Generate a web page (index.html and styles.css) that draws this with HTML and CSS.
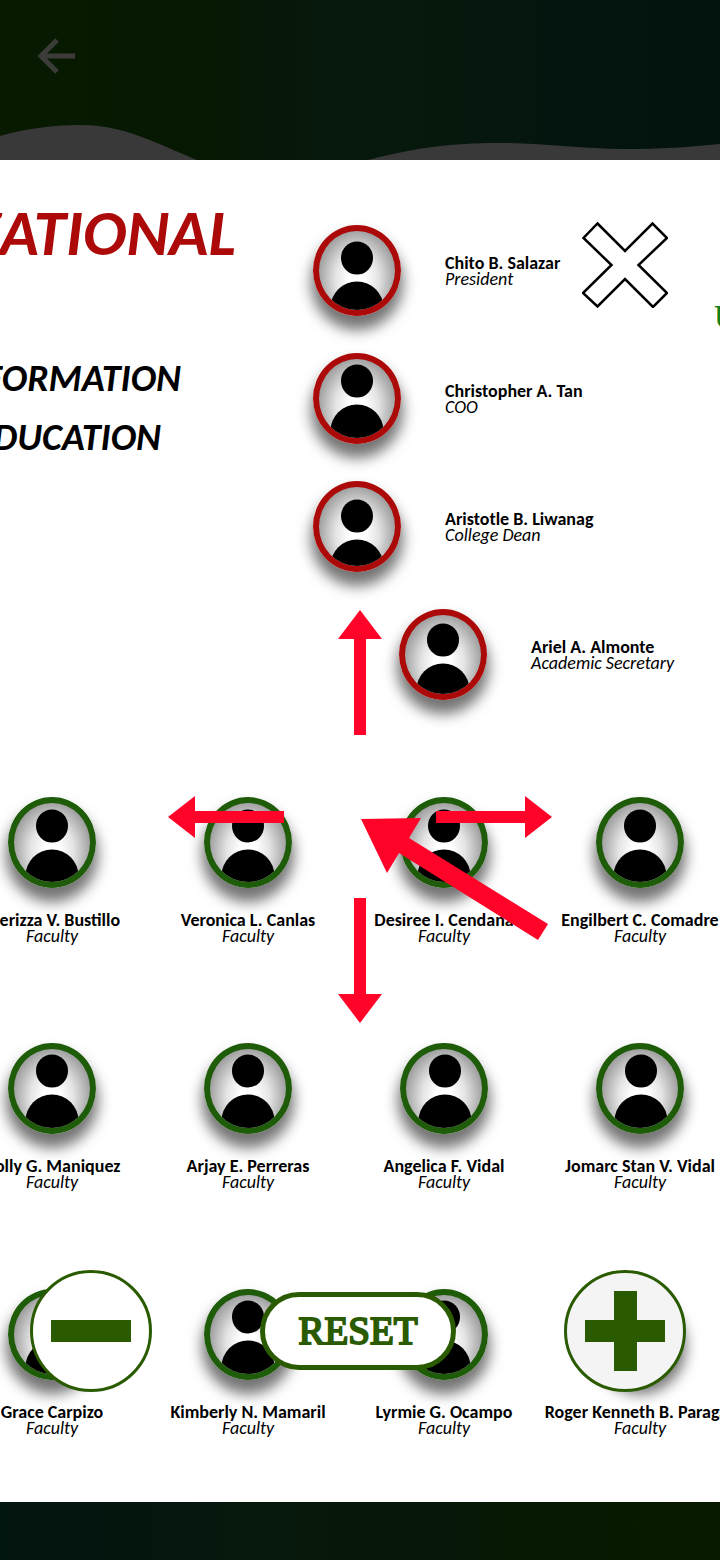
FILE: index.html
```
<!DOCTYPE html>
<html lang="en">
<head>
<meta charset="utf-8">
<meta name="viewport" content="width=device-width, initial-scale=1">
<title>Organizational chart</title>
<link rel="stylesheet" href="styles.css">
</head>
<body>
<svg class="defs" aria-hidden="true">
  <defs>
    <clipPath id="face"><ellipse cx="44" cy="45.5" rx="38.5" ry="40"/></clipPath>
    <g id="person"><ellipse cx="44" cy="28" rx="16" ry="16.5"/><ellipse cx="44" cy="78" rx="26.5" ry="26.5"/></g>
  </defs>
</svg>
<div class="app">
  <header class="topbar">
    <button class="back" aria-label="Back">
      <svg viewBox="0 0 38 36"><path d="M38 18H4M20 2L4 18L20 34" fill="none" stroke="currentColor" stroke-width="5"/></svg>
    </button>
    <svg class="wave" viewBox="0 0 720 40" preserveAspectRatio="none" aria-hidden="true">
      <path d="M0 16C25 9 50 5 80 5C125 5 155 23 197 40H0ZM368 40C415 28 450 23 500 23C545 23 580 29 625 29C660 29 690 27 720 24V40Z" fill="#3a393a"/>
    </svg>
  </header>

  <main class="viewer">
    <div class="chart">
      <div class="upper">
        <div class="titles">
          <h1>ORGANIZATIONAL</h1>
          <h2>INFORMATION</h2>
          <h2>EDUCATION</h2>
        </div>
        <ul class="officers">
          <li class="officer"><svg class="avatar" viewBox="6 6 76 79"><g clip-path="url(#face)"><use href="#person" y="5"/></g></svg><p class="label"><b>Chito B. Salazar</b><i>President</i></p></li>
          <li class="officer"><svg class="avatar" viewBox="6 6 76 79"><g clip-path="url(#face)"><use href="#person"/></g></svg><p class="label"><b>Christopher A. Tan</b><i>COO</i></p></li>
          <li class="officer"><svg class="avatar" viewBox="6 6 76 79"><g clip-path="url(#face)"><use href="#person" y="7"/></g></svg><p class="label"><b>Aristotle B. Liwanag</b><i>College Dean</i></p></li>
          <li class="officer staff"><svg class="avatar" viewBox="6 6 76 79"><g clip-path="url(#face)"><use href="#person" y="3"/></g></svg><p class="label"><b>Ariel A. Almonte</b><i>Academic Secretary</i></p></li>
        </ul>
        <p class="school">U</p>
      </div>
      <ul class="faculty">
        <li class="member"><svg class="avatar" viewBox="6 6 76 79"><g clip-path="url(#face)"><use href="#person" y="1"/></g></svg><p class="label"><b>Merizza V. Bustillo</b><i>Faculty</i></p></li>
        <li class="member"><svg class="avatar" viewBox="6 6 76 79"><g clip-path="url(#face)"><use href="#person" y="1"/></g></svg><p class="label"><b>Veronica L. Canlas</b><i>Faculty</i></p></li>
        <li class="member"><svg class="avatar" viewBox="6 6 76 79"><g clip-path="url(#face)"><use href="#person" y="1"/></g></svg><p class="label"><b>Desiree I. Cendana</b><i>Faculty</i></p></li>
        <li class="member"><svg class="avatar" viewBox="6 6 76 79"><g clip-path="url(#face)"><use href="#person" y="1"/></g></svg><p class="label"><b>Engilbert C. Comadre</b><i>Faculty</i></p></li>
        <li class="member"><svg class="avatar" viewBox="6 6 76 79"><g clip-path="url(#face)"><use href="#person"/></g></svg><p class="label"><b>Dolly G. Maniquez</b><i>Faculty</i></p></li>
        <li class="member"><svg class="avatar" viewBox="6 6 76 79"><g clip-path="url(#face)"><use href="#person"/></g></svg><p class="label"><b>Arjay E. Perreras</b><i>Faculty</i></p></li>
        <li class="member"><svg class="avatar" viewBox="6 6 76 79"><g clip-path="url(#face)"><use href="#person" x="1"/></g></svg><p class="label"><b>Angelica F. Vidal</b><i>Faculty</i></p></li>
        <li class="member"><svg class="avatar" viewBox="6 6 76 79"><g clip-path="url(#face)"><use href="#person" x="1"/></g></svg><p class="label"><b>Jomarc Stan V. Vidal</b><i>Faculty</i></p></li>
        <li class="member"><svg class="avatar" viewBox="6 6 76 79"><g clip-path="url(#face)"><use href="#person"/></g></svg><p class="label"><b>Grace Carpizo</b><i>Faculty</i></p></li>
        <li class="member"><svg class="avatar" viewBox="6 6 76 79"><g clip-path="url(#face)"><use href="#person"/></g></svg><p class="label"><b>Kimberly N. Mamaril</b><i>Faculty</i></p></li>
        <li class="member"><svg class="avatar" viewBox="6 6 76 79"><g clip-path="url(#face)"><use href="#person"/></g></svg><p class="label"><b>Lyrmie G. Ocampo</b><i>Faculty</i></p></li>
        <li class="member"><svg class="avatar" viewBox="6 6 76 79"><g clip-path="url(#face)"><use href="#person"/></g></svg><p class="label"><b>Roger Kenneth B. Paragas</b><i>Faculty</i></p></li>
      </ul>
    </div>

    <button class="close" aria-label="Close">
      <svg viewBox="0 0 86 86"><path d="M15.500 1.500L43 29L70.500 1.500L85 16L56.500 43L85 71L71 85L43 57L15.500 84.500L1 71L29.500 43L1.500 16Z" fill="#fff" stroke="#000" stroke-width="2.500"/></svg>
    </button>

    <div class="pan">
      <button class="up" aria-label="Pan up"><svg width="44" height="125" viewBox="0 0 44 125"><path d="M22 0L44 29H28V125H16V29H0Z"/></svg></button>
      <button class="left" aria-label="Pan left"><svg width="116" height="42" viewBox="0 0 116 42"><path d="M0 21L27 0V15H116V27H27V42Z"/></svg></button>
      <button class="right" aria-label="Pan right"><svg width="116" height="42" viewBox="0 0 116 42"><path d="M116 21L89 0V15H0V27H89V42Z"/></svg></button>
      <button class="down" aria-label="Pan down"><svg width="44" height="125" viewBox="0 0 44 125"><path d="M22 125L44 96H28V0H16V96H0Z"/></svg></button>
      <svg class="pointer" viewBox="0 0 187 122" aria-hidden="true"><path d="M0 1L60 0L48 20L187 106L177 122L38 35L26 55Z"/></svg>
    </div>

    <div class="zoombar">
      <button class="round" aria-label="Zoom out"><svg viewBox="0 0 80 80"><path d="M0 29H80V51H0Z"/></svg></button>
      <button class="reset">RESET</button>
      <button class="round tinted" aria-label="Zoom in"><svg viewBox="0 0 80 80"><path d="M0 29H29V0H52V29H80V51H52V80H29V51H0Z"/></svg></button>
    </div>
  </main>
  <footer class="bottombar"></footer>
</div>
</body>
</html>
```
FILE: styles.css
```
* { box-sizing: border-box; }
body { margin: 0; background: #fff; color: #000; font-family: Carlito, Lato, sans-serif; }
h1, h2, p, ul { margin: 0; padding: 0; }
ul { list-style: none; }
button { padding: 0; border: 0; background: none; font: inherit; cursor: pointer; }
svg { display: block; }
.defs { position: absolute; width: 0; height: 0; }

.app { display: flex; flex-direction: column; min-height: 100vh; overflow: hidden; }

.topbar {
  display: flex; flex-direction: column; justify-content: space-between;
  flex: none; height: 160px; padding-top: 38px;
  background: linear-gradient(90deg, #081a00, #071803 30%, #07180b 38%, #06180d 65%, #04150f 78%, #03130e);
}
.back { width: 38px; margin-left: 37px; color: #3c3c3b; }
.wave { width: 100%; height: 40px; }
.bottombar { flex: none; height: 58px; background: linear-gradient(90deg, #03150f, #05160e 25%, #07180c 35%, #07180a 62%, #071803 70%, #081a00); }

.viewer { position: relative; flex: 1; overflow: hidden; background: #fff; }
.upper { display: grid; grid-template-columns: 236px 478px 1fr; padding-top: 65px; }
.titles { display: flex; flex-direction: column; align-items: flex-end; font-style: italic; white-space: nowrap; }
h1 { margin: -26px 0 82px; color: #ac0909; font-size: 65px; line-height: 68px; }
h2 { margin-right: 55px; font-size: 38px; line-height: 59px; }
h2 + h2 { margin-right: 75px; }

.officers { display: grid; grid-auto-rows: 128px; padding-left: 77px; color: #ac0909; }
.officer { display: flex; align-items: center; align-self: start; gap: 44px; }
.staff { padding-left: 86px; }
.avatar {
  flex: none; width: 88px; height: 91px;
  border-radius: 50%;
  background: radial-gradient(ellipse at 50% 60%, #fff 15%, #e4e4e4 40%, #a0a0a0 72%);
  border: 6px solid currentColor;
  box-shadow: 0 12px 14px 2px rgba(0, 0, 0, .55);
  fill: #000;
}
.label { color: #000; font-size: 18px; line-height: 16px; white-space: nowrap; }
.label b, .label i { display: block; }
.school { margin-top: 75px; color: #12801c; font: bold 34px/34px "Liberation Serif", serif; }

.faculty {
  display: grid; grid-template-columns: repeat(4, 196px); grid-template-rows: 246px 246px auto;
  margin: 60px 0 0 -46px; color: #1f5c0a;
}
.member { display: flex; flex-direction: column; align-items: center; gap: 24px; text-align: center; }

.close { position: absolute; top: 62px; right: 52px; width: 86px; }

.pan {
  position: absolute; top: 450px; left: 50%; width: 384px; margin-left: -192px;
  display: grid; grid-template-columns: 116px 152px 116px; grid-template-rows: 125px 163px 125px;
  place-items: center; fill: #ff0329;
}
.up { grid-area: 1 / 2; }
.left { grid-area: 2 / 1; }
.right { grid-area: 2 / 3; }
.down { grid-area: 3 / 2; }
.pointer { position: absolute; top: 208px; left: 193px; width: 187px; }

.zoombar {
  position: absolute; right: 0; bottom: 110px; left: 0;
  display: flex; align-items: center; justify-content: space-between; padding: 0 34px 0 30px;
  color: #2b5b00;
}
.round {
  display: grid; place-items: center; width: 122px; height: 122px;
  border: 3px solid currentColor; border-radius: 50%; background: #fff; color: inherit;
}
.round svg { width: 80px; fill: currentColor; }
.tinted { background: #f4f4f4; }
.reset {
  width: 196px; height: 78px; border: 5px solid currentColor; border-radius: 39px;
  background: #fff; color: inherit; font: 39px/40px "Liberation Serif", serif;
  -webkit-text-stroke: 2px currentColor;
}
```
